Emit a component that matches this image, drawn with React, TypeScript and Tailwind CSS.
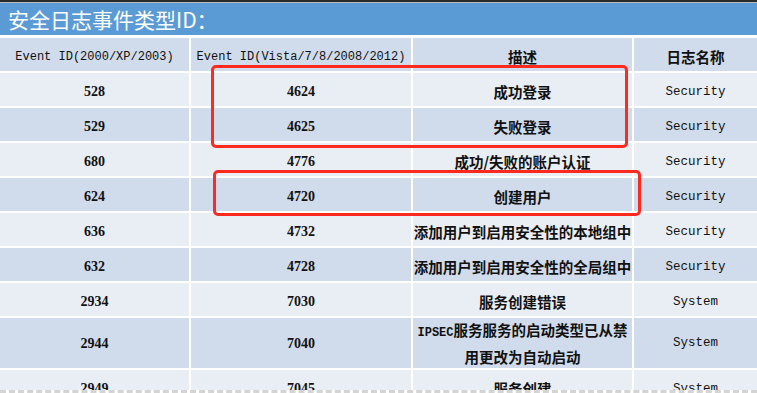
import React from 'react'

type Row = {
  oldId: string
  newId: string
  desc: React.ReactNode
  log: string
  tall?: boolean
}

const rows: Row[] = [
  { oldId: '528', newId: '4624', desc: '成功登录', log: 'Security' },
  { oldId: '529', newId: '4625', desc: '失败登录', log: 'Security' },
  { oldId: '680', newId: '4776', desc: '成功/失败的账户认证', log: 'Security' },
  { oldId: '624', newId: '4720', desc: '创建用户', log: 'Security' },
  { oldId: '636', newId: '4732', desc: '添加用户到启用安全性的本地组中', log: 'Security' },
  { oldId: '632', newId: '4728', desc: '添加用户到启用安全性的全局组中', log: 'Security' },
  { oldId: '2934', newId: '7030', desc: '服务创建错误', log: 'System' },
  {
    oldId: '2944',
    newId: '7040',
    desc: (
      <>
        <span className="font-['Liberation_Mono',monospace] text-[12px]">IPSEC</span>服务服务的启动类型已从禁
        <br />
        用更改为自动启动
      </>
    ),
    log: 'System',
    tall: true,
  },
  { oldId: '2949', newId: '7045', desc: '服务创建', log: 'System' },
]

const border = 'border-2 border-white text-center pb-0'
const mono = "font-['Liberation_Mono','Noto_Sans_CJK_SC',monospace] text-[#111]"
const num = "font-['Liberation_Serif',serif] font-bold text-[14px] text-[#111]"
const cjk = "font-['Noto_Sans_CJK_SC',sans-serif] font-bold text-[14.5px] text-[#111]"

export default function App() {
  return (
    <div className="relative w-[757px] h-[393px] overflow-hidden bg-white flex flex-col">
      {/* top window edge */}
      <div className="h-[2px] bg-[#2b2b2b]" />
      <div className="h-px bg-[#b8bcc0]" />

      {/* title bar */}
      <div className="h-[32px] bg-[#5b9bd5] flex items-center pl-[8px]">
        <span className="text-white text-[21px] font-['Noto_Sans_CJK_SC',sans-serif] leading-none">
          安全日志事件类型ID：
        </span>
      </div>
      <div className="h-[3px] bg-white" />

      {/* table */}
      <div className="flex-1 overflow-hidden">
        <table className="w-full table-fixed border-collapse">
          <colgroup>
            <col className="w-[190px]" />
            <col className="w-[222px]" />
            <col className="w-[221px]" />
            <col />
          </colgroup>
          <thead>
            <tr className="h-[34px] bg-[#d0dbeb]">
              <th className={`${mono} ${border} text-[12px] leading-[20px] pt-[5px] font-normal border-t-0 border-l-0`}>Event ID(2000/XP/2003)</th>
              <th className={`${mono} ${border} text-[12px] leading-[20px] pt-[5px] font-normal border-t-0`}>Event ID(Vista/7/8/2008/2012)</th>
              <th className={`${cjk} ${border} leading-[20px] pt-[5px] border-t-0`}>描述</th>
              <th className={`${cjk} ${border} leading-[20px] pt-[5px] border-t-0 border-r-0`}>日志名称</th>
            </tr>
          </thead>
          <tbody>
            {rows.map((r, i) => {
              const pad = r.tall ? 'pt-0 leading-[23px]' : 'pt-[5px] leading-[22px]'
              return (
                <tr
                  key={r.oldId}
                  className={`${r.tall ? 'h-[49px]' : 'h-[35px]'} ${i % 2 === 0 ? 'bg-[#e9edf4]' : 'bg-[#d0dbeb]'}`}
                >
                  <td className={`${num} ${border} ${pad} border-l-0`}>{r.oldId}</td>
                  <td className={`${num} ${border} ${pad}`}>{r.newId}</td>
                  <td className={`${cjk} ${border} ${pad} whitespace-nowrap`}>{r.desc}</td>
                  <td className={`${mono} ${border} ${pad} text-[12.5px] border-r-0`}>{r.log}</td>
                </tr>
              )
            })}
          </tbody>
        </table>
      </div>

      {/* slide bottom edge */}
      <div className="h-[3px] border-t-[3px] border-dashed border-[#d4d4d4] bg-white" />

      {/* red highlight boxes */}
      <div className="absolute left-[211px] top-[65px] w-[417px] h-[83px] border-[3px] border-[#ff2a1f] rounded-[5px]" />
      <div className="absolute left-[213px] top-[170px] w-[428px] h-[46px] border-[3px] border-[#ff2a1f] rounded-[5px]" />
    </div>
  )
}
